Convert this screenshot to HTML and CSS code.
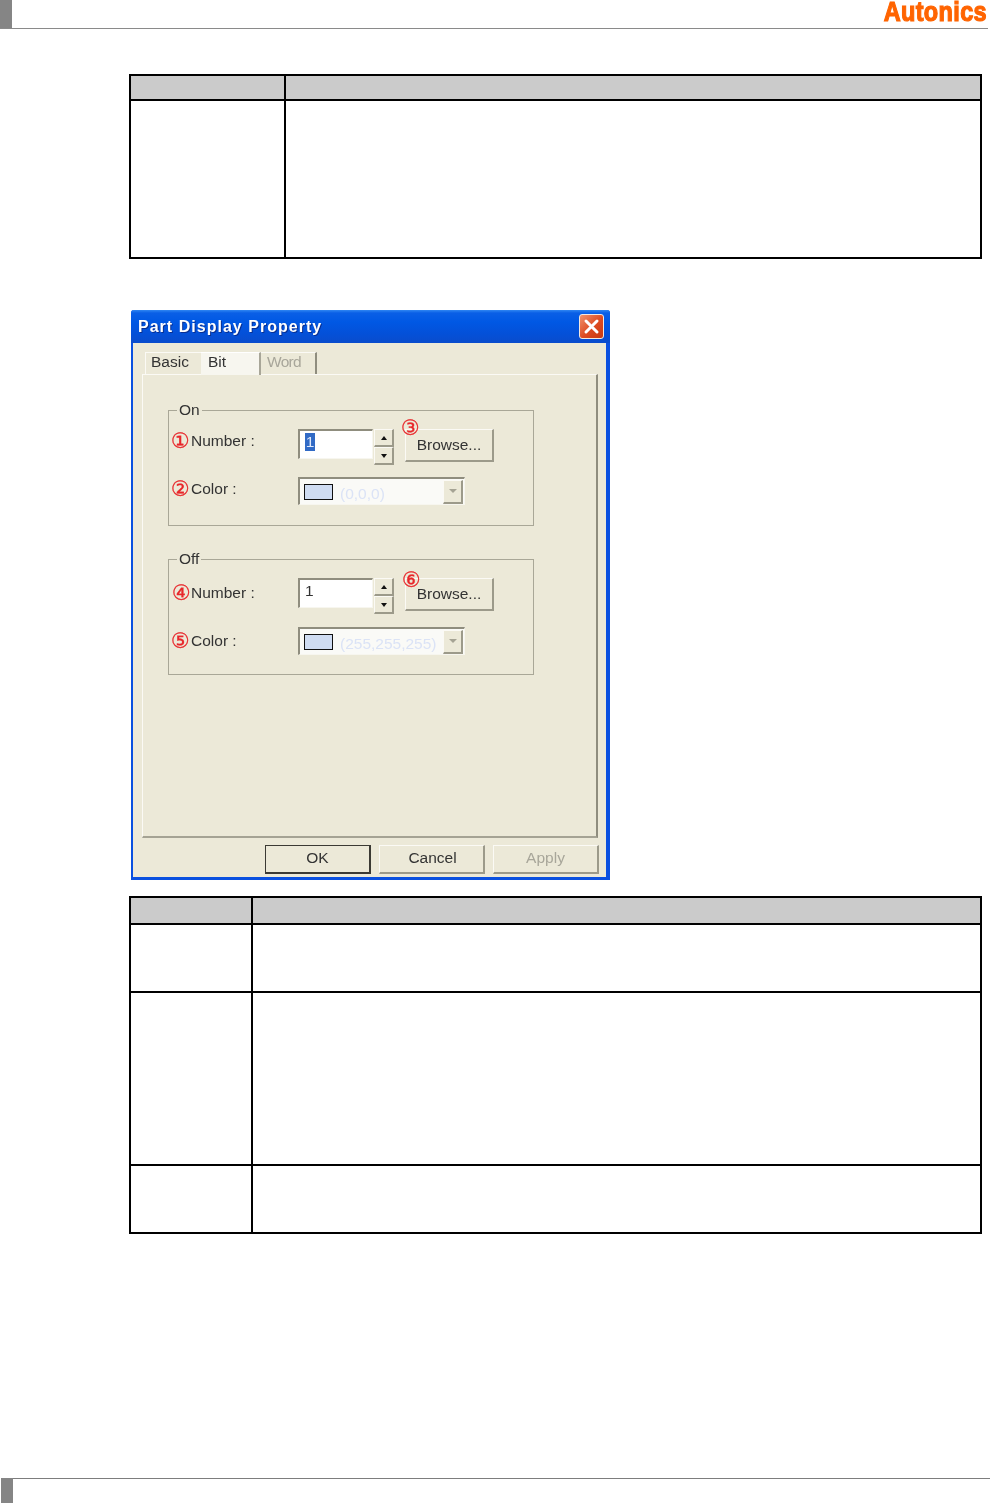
FILE: index.html
```html
<!DOCTYPE html>
<html lang="en">
<head>
<meta charset="utf-8">
<title>Part Display Property</title>
<link rel="stylesheet" href="styles.css">
</head>
<body>
<div class="page">
  <header class="top">
    <div class="top-block"></div>
    <div class="logo">Autonics</div>
  </header>
  <main class="main">
    <table class="doc doc-a">
      <tr class="head"><th class="c1"></th><th></th></tr>
      <tr class="r-a"><td></td><td></td></tr>
    </table>

    <section class="dialog">
      <div class="titlebar">
        <span class="title">Part Display Property</span>
        <span class="close">
          <svg width="17" height="17" viewBox="0 0 17 17"><path d="M3 3 L14 14 M14 3 L3 14" stroke="#fff" stroke-width="3" stroke-linecap="round"/></svg>
        </span>
      </div>
      <div class="dlg-body">
        <div class="tabs">
          <div class="tab tab-basic">Basic</div>
          <div class="tab tab-bit">Bit</div>
          <div class="tab tab-word">Word</div>
        </div>
        <div class="panel">
          <div class="group">
            <span class="legend">On</span>
            <div class="grid">
              <div class="lbl lbl-n1"><span class="num">①</span>Number :</div>
              <div class="edit"><div class="input"><span class="sel">1</span></div>
                <div class="spin"><button class="sb"><i class="up"></i></button><button class="sb"><i class="dn"></i></button></div></div>
              <div class="browse-wrap"><span class="num num-abs">③</span><button class="btn browse">Browse...</button></div>
              <div class="lbl lbl-c1"><span class="num">②</span>Color :</div>
              <div class="combo"><span class="swatch"></span><span class="cval">(0,0,0)</span><span class="drop"><i class="dn dn-g"></i></span></div>
            </div>
          </div>
          <div class="group group-off">
            <span class="legend">Off</span>
            <div class="grid grid-off">
              <div class="lbl lbl-n2"><span class="num num-in">④</span>Number :</div>
              <div class="edit"><div class="input"><span class="plain">1</span></div>
                <div class="spin"><button class="sb"><i class="up"></i></button><button class="sb"><i class="dn"></i></button></div></div>
              <div class="browse-wrap"><span class="num num-abs num-six">⑥</span><button class="btn browse">Browse...</button></div>
              <div class="lbl lbl-c2"><span class="num">⑤</span>Color :</div>
              <div class="combo"><span class="swatch"></span><span class="cval">(255,255,255)</span><span class="drop"><i class="dn dn-g"></i></span></div>
            </div>
          </div>
        </div>
        <div class="actions">
          <button class="btn act act-ok">OK</button>
          <button class="btn act act-cancel">Cancel</button>
          <button class="btn act act-off">Apply</button>
        </div>
      </div>
    </section>

    <table class="doc doc-b">
      <tr class="head-b"><th class="c1b"></th><th></th></tr>
      <tr class="r-b1"><td></td><td></td></tr>
      <tr class="r-b2"><td></td><td></td></tr>
      <tr class="r-b3"><td></td><td></td></tr>
    </table>
  </main>
  <footer class="bottom"><div class="bottom-block"></div></footer>
</div>
</body>
</html>
```
FILE: styles.css
```css
* { box-sizing: border-box; }
html, body { margin: 0; padding: 0; background: #fff; }
.page {
  width: 990px; height: 1503px; display: flex; flex-direction: column;
  overflow: hidden; font-family: "Liberation Sans", Arial, sans-serif; color: #333;
}

/* header */
.top { height: 29px; width: 988px; border-bottom: 1px solid #8a8a8a; display: flex; justify-content: space-between; flex: none; }
.top-block { width: 12px; background: #858585; }
.logo {
  font-weight: 700; font-size: 28px; line-height: 24px; height: 24px;
  color: #ff6400; -webkit-text-stroke: 1.2px #ff6400; letter-spacing: 0.4px;
  transform: scaleX(0.84); transform-origin: right center; white-space: nowrap; margin-right: 1px;
}

/* main */
.main { padding: 45px 0 0 129px; flex: 1; }
.doc { border-collapse: collapse; table-layout: fixed; width: 853px; }
.doc th, .doc td { border: 2px solid #000; padding: 0; }
.doc th { background: #cbcbcb; }
.c1 { width: 155px; }
.head th { height: 25px; }
.r-a td { height: 158px; }
.c1b { width: 122px; }
.head-b th { height: 27px; }
.r-b1 td { height: 68px; }
.r-b2 td { height: 173px; }
.r-b3 td { height: 68px; }
.doc-b { margin-top: 16px; }

/* dialog */
.dialog {
  margin: 51px 0 0 2px; width: 479px; height: 570px;
  background: #ece9d8; display: flex; flex-direction: column;
  border: solid #0a50e0; border-width: 0 4px 3px 2px; border-radius: 3px 3px 0 0;
  filter: blur(0.35px);
}
.titlebar {
  height: 33px; margin: 0 -4px 0 -2px; flex: none; display: flex; align-items: center; justify-content: space-between;
  padding: 0 6px 0 7px; border-radius: 3px 3px 0 0;
  background: linear-gradient(#2f86f2 0, #0a5fe6 3px, #0058e4 12px, #0450d8 24px, #0a4ccc 100%);
}
.title { font-weight: 700; font-size: 16px; letter-spacing: 1.02px; color: #fff; text-shadow: 1px 1px 0 #0a2f90; }
.close {
  width: 25px; height: 25px; border: 1px solid #f4e8e0; border-radius: 3px; display: flex; align-items: center; justify-content: center;
  background: linear-gradient(135deg, #f0936e, #dd4a20 55%, #c93a12);
}
.dlg-body { flex: 1; padding: 9px 7px 3px 9px; display: flex; flex-direction: column; font-size: 15.5px; }

.tabs { display: flex; height: 22px; padding-left: 3px; flex: none; position: relative; z-index: 1; }
.tab { height: 22px; line-height: 18px; }
.tab-basic { width: 56px; padding-left: 5px; border-left: 1px solid #fbfaf5; border-top: 1px solid #fbfaf5; }
.tab-bit { width: 60px; height: 23px; padding-left: 7px; background: #f7f6ef; border-top: 1px solid #fff; border-right: 2px solid #a8a698; }
.tab-word { width: 56px; padding-left: 6px; color: #a8a69a; letter-spacing: -0.7px; border-top: 1px solid #fbfaf5; border-right: 2px solid #8f8d7e; }

.panel {
  height: 464px; margin-right: 1px; padding: 35px 0 0 25px; flex: none;
  border: solid; border-width: 1px 2px 2px 1px; border-color: #fbfaf5 #8f8d7e #a5a394 #fbfaf5;
}
.group {
  width: 366px; height: 116px; border: 1px solid #a9a797; position: relative; padding: 18px 0 0 2px;
}
.group-off { margin-top: 33px; }
.legend { position: absolute; left: 8px; top: -10px; padding: 0 2px; background: #ece9d8; line-height: 17px; }

.grid { display: grid; grid-template-columns: 127px 96px 89px; column-gap: 0; row-gap: 12px; }
.grid-off { row-gap: 13px; }
.lbl { display: flex; align-items: center; height: 22px; white-space: nowrap; }
.lbl-n1, .lbl-c1 { margin-top: 1px; }
.lbl-n2 { margin-top: 4px; }
.lbl-c2 { margin-top: 3px; }
.num {
  width: 20px; flex: none; font-family: "DejaVu Sans", sans-serif; color: #e8262a; font-size: 21px; line-height: 20px;
  -webkit-text-stroke: 0.3px #e8262a;
}
.num-in { padding-left: 1px; }

.edit { display: flex; gap: 1px; height: 36px; }
.input {
  width: 75px; height: 30px; background: #fff; padding: 2px 0 0 5px; line-height: 18px;
  border: solid; border-width: 2px 1px 1px 2px; border-color: #8f8d7e #f7f6ef #f7f6ef #8f8d7e;
}
.sel { display: inline-block; width: 10px; height: 18px; background: #316ac5; color: #dfe8fa; text-align: center; }
.spin { display: flex; flex-direction: column; gap: 0; }
.sb, .btn { font: inherit; color: inherit; margin: 0; padding: 0; background: #ece9d8; border: solid; border-color: #fbfaf5 #9c9a8a #9c9a8a #fbfaf5; }
.sb { width: 20px; height: 18px; border-width: 1px 2px 2px 1px; display: flex; align-items: center; justify-content: center; }
.up, .dn { display: block; width: 0; height: 0; border-left: 3px solid transparent; border-right: 3px solid transparent; }
.up { border-bottom: 4px solid #111; }
.dn { border-top: 4px solid #111; }
.dn-g { border-top-color: #a5a394; border-left-width: 4px; border-right-width: 4px; }

.browse-wrap { position: relative; padding-left: 11px; width: 100px; }
.btn { border-width: 1px 2px 2px 1px; }
.browse { width: 89px; height: 33px; padding-bottom: 1px; }
.num-abs { position: absolute; left: 7px; top: -11px; }
.num-six { left: 8px; top: -8px; }

.combo {
  width: 167px; height: 28px; display: flex; align-items: center; grid-column: 2 / span 2;
  border: solid; border-width: 2px 1px 1px 2px; border-color: #8f8d7e #f7f6ef #f7f6ef #8f8d7e; background: #fafaf7;
  padding: 0 0 0 4px;
}
.swatch { width: 29px; height: 16px; background: #cfdcf2; border: 1px solid #111; flex: none; }
.cval { margin-left: 7px; color: #dbe3f6; flex: 1; padding-top: 4px; }
.drop {
  width: 20px; height: 24px; margin-right: 1px; flex: none; display: flex; align-items: center; justify-content: center; background: #ece9d8;
  border: solid; border-width: 1px 2px 2px 1px; border-color: #fbfaf5 #9c9a8a #9c9a8a #fbfaf5;
}

.actions { display: flex; justify-content: flex-end; gap: 8px; margin-top: 7px; }
.act { width: 106px; height: 29px; padding-bottom: 3px; }
.act-ok { border: solid #3b3a34; border-width: 1px 2px 2px 1px; }
.act-cancel { padding-left: 2px; }
.act-off { color: #a8a69a; }

/* footer */
.bottom { height: 25px; flex: none; border-top: 1px solid #7d7d7d; margin-left: 13px; position: relative; }
.bottom-block { width: 12px; height: 25px; margin: -1px 0 0 -12px; background: #858585; }
```
